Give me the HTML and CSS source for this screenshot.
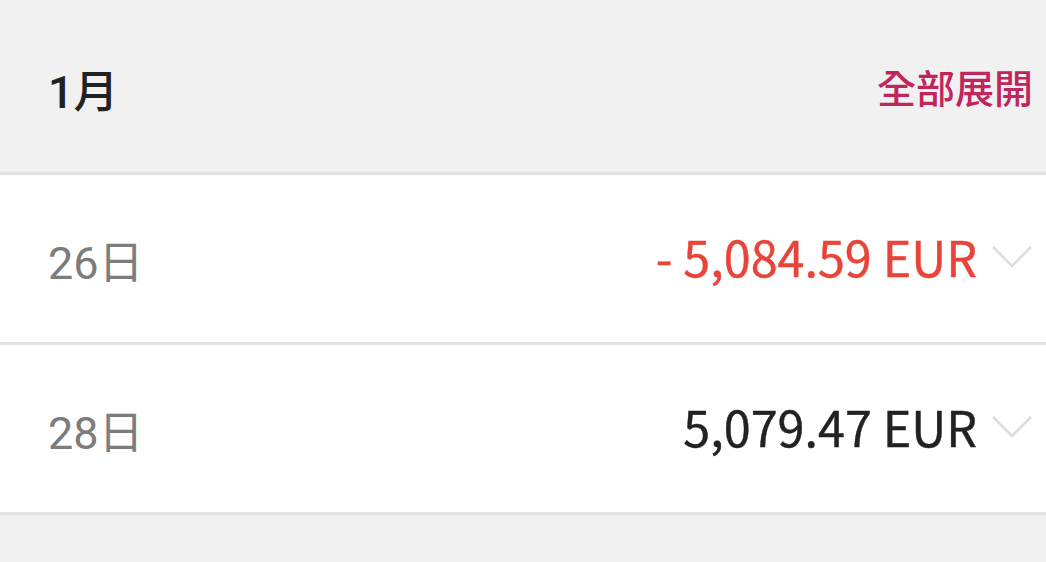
FILE: index.html
```html
<!doctype html>
<html lang="zh-Hant">
<head>
	<meta charset="UTF-8">
	<title>交易紀錄</title>
	<link rel="stylesheet" href="styles.css">
</head>
<body>
	<div class="month">
		<span class="month-title">1月</span>
		<a class="expand" href="#">全部展開</a>
	</div>
	<ul class="daylist">
		<li class="day">
			<span class="date">26日</span>
			<span class="amount minus">- 5,084.59 EUR</span>
			<svg class="arrow" width="40" height="22" viewBox="0 0 40 22"><path d="M1 1 L20 20 L39 1" fill="none" stroke="#dcdcdc" stroke-width="2.5"/></svg>
		</li>
		<li class="day">
			<span class="date">28日</span>
			<span class="amount">5,079.47 EUR</span>
			<svg class="arrow" width="40" height="22" viewBox="0 0 40 22"><path d="M1 1 L20 20 L39 1" fill="none" stroke="#dcdcdc" stroke-width="2.5"/></svg>
		</li>
	</ul>
</body>
</html>
```

FILE: styles.css
```css
*{
	padding:0;
	margin:0;
}
body{
	background:#f1f1f1;
	font-family:Roboto, "Noto Sans CJK TC", sans-serif;
}
.month{
	height:172px;
	display:flex;
	align-items:center;
	justify-content:space-between;
	padding:0 13px 0 48px;
	border-bottom:3px solid #e2e2e2;
}
.month-title{
	font-size:45px;
	font-weight:500;
	color:#222;
	margin-top:4px;
}
.expand{
	font-family:"Noto Sans CJK TC", sans-serif;
	font-size:39px;
	font-weight:500;
	color:#c0255c;
	text-decoration:none;
}
.daylist{
	list-style:none;
}
.day{
	height:167px;
	display:flex;
	align-items:center;
	padding:0 14px 0 48px;
	background:#fff;
	border-bottom:3px solid #e2e2e2;
}
.date{
	flex:1;
	font-size:45px;
	color:#7c7c7c;
	margin-top:2px;
}
.amount{
	font-family:"Noto Sans CJK TC", sans-serif;
	font-size:48.5px;
	color:#222;
	margin-top:-6px;
	-webkit-text-stroke:0.4px currentColor;
}
.amount.minus{
	color:#e8443a;
}
.arrow{
	margin-left:15px;
	margin-top:-4px;
}
```
